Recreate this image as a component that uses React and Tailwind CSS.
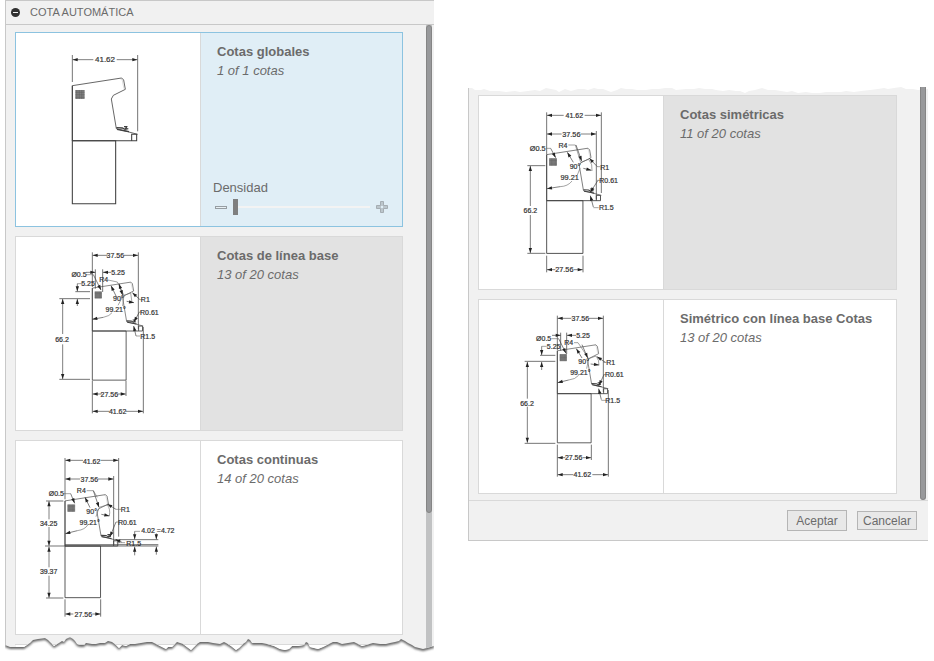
import React from 'react';

const INK = '#404040';

function Head({ x, y, angle }) {
  return <polygon points="0,0 -15,-5 -15,5" fill="#222" transform={`translate(${x} ${y}) rotate(${angle})`} />;
}

/* Straight line with an optional arrow head at its start and end. */
function Arrow({ line }) {
  const [x1, y1, x2, y2, heads = 'e'] = line;
  const angle = (Math.atan2(y2 - y1, x2 - x1) * 180) / Math.PI;
  return (
    <g>
      <line x1={x1} y1={y1} x2={x2} y2={y2} stroke={INK} strokeWidth="2" />
      {heads.includes('e') && <Head x={x2} y={y2} angle={angle} />}
      {heads.includes('s') && <Head x={x1} y={y1} angle={angle + 180} />}
    </g>
  );
}

function Value({ x, y, size = 21, children }) {
  return (
    <text x={x} y={y} fontSize={size} textAnchor="middle" dominantBaseline="central" fill="#333" stroke="#333" strokeWidth="0.6">
      {children}
    </text>
  );
}

/* Side view of the cabinet; the origin is where head and base meet on the left. */
function Cabinet({ x, y, scale }) {
  const cells = [12, 17, 22, 27, 32];
  return (
    <g transform={`translate(${x} ${y}) scale(${scale})`} fill="none" stroke={INK} strokeWidth="3.2">
      <path d="M0 0V-165L148 -188L154 -182L159 -154L123 -136L117 -125L132 -36L196 -19" strokeWidth="2.4" />
      <path d="M143 -186L149 -184L155 -156" strokeWidth="1" stroke="#999" />
      <path d="M0 0V-165M0 0H193V-19H178V0" />
      <path d="M0 0H130V189H0Z" />
      <path d="M132 -39L150 -38L158 -34L168 -36M134 -34L160 -29L170 -27M155 -42L163 -42L159 -34" strokeWidth="4" />
      <rect x="9" y="-152" width="28" height="27" fill="#999" stroke="none" />
      {cells.map((c) => (
        <path key={c} d={`M${c} -152V-125M9 ${c - 161}H37`} strokeWidth="1.6" stroke="#555" />
      ))}
    </g>
  );
}

function Drawing({ viewBox, title, cabinet, lines = [], arrows = [], curves = [], values = [] }) {
  return (
    <svg viewBox={viewBox} role="img" aria-label={title} className="block w-full h-full" fontFamily='"Liberation Sans", Arial, sans-serif'>
      <Cabinet {...cabinet} />
      {lines.map((d) => (
        <path key={d} d={d} fill="none" stroke={INK} strokeWidth="2.2" />
      ))}
      {curves.map((d) => (
        <path key={d} d={d} fill="none" stroke="#666" strokeWidth="1.8" />
      ))}
      {arrows.map((line) => (
        <Arrow key={line.join()} line={line} />
      ))}
      {values.map(([x, y, label, size]) => (
        <Value key={`${x}-${y}`} x={x} y={y} size={size}>
          {label}
        </Value>
      ))}
    </svg>
  );
}

const drawings = {
  global: {
    viewBox: '48 99 552 579',
    cabinet: { x: 217, y: 422, scale: 1 },
    lines: ['M217 165V246M413 165V394'],
    arrows: [[280, 179, 218, 179], [350, 179, 412, 179]],
    values: [[315, 179, '41.62', 24]],
  },
  baseline: {
    viewBox: '18 15 552 579',
    cabinet: { x: 247, y: 297, scale: 0.78 },
    lines: [
      'M247 61V165M385 61V292', 'M400 285V544M247 446V544M348 446V492',
      'M148 200H240M196 179H240M148 442H240', 'M256 112V170M278 112V180',
    ],
    arrows: [
      [292, 70, 248, 70], [342, 70, 384, 70],
      [158, 306, 158, 201], [158, 337, 158, 441],
      [275, 486, 248, 486], [322, 486, 347, 486],
      [298, 538, 248, 538], [348, 538, 399, 538],
      [304, 121, 279, 121], [228, 121, 256, 121],
      [202, 155, 202, 178], [202, 222, 202, 201],
      [250, 128, 273, 174], [327, 155, 338, 190, 'se'],
      [390, 203, 367, 182], [388, 240, 372, 270], [378, 312, 371, 282],
      [350, 208, 372, 212],
      [280, 256, 247, 262], [320, 196, 303, 161],
    ],
    curves: ['M228 128H250M202 155H218M294 144L322 150L342 190L362 183L366 212', 'M338 222L342 188M306 242Q300 252 280 256M340 190L324 220', 'M390 203H398M388 240H396M378 312H390'],
    values: [
      [316, 70, '37.56'], [207, 127, 'Ø0.5'], [324, 121, '5.25'], [234, 155, '5.25'],
      [281, 143, 'R4'], [325, 200, '90°'], [317, 231, '99.21°'], [406, 203, 'R1'],
      [418, 240, 'R0.61'], [156, 321, '66.2'], [413, 314, 'R1.5'], [298, 486, '27.56'], [323, 538, '41.62'],
    ],
  },
  continuous: {
    viewBox: '18 15 552 579',
    cabinet: { x: 165, y: 330, scale: 0.82 },
    lines: [
      'M165 66V190M326 66V302M311 120V326', 'M165 490V542M272 490V542',
      'M108 195H160M105 330H445M108 486H160M326 311H445', 'M165 326H445',
    ],
    arrows: [
      [219, 73, 166, 73], [272, 73, 325, 73], [210, 129, 166, 129], [264, 129, 310, 129],
      [117, 250, 117, 196], [117, 273, 117, 329], [117, 394, 117, 332], [117, 419, 117, 485],
      [190, 534, 166, 534], [247, 534, 271, 534],
      [374, 286, 374, 310], [374, 358, 374, 332], [439, 292, 439, 310], [439, 356, 439, 332],
      [182, 173, 194, 202], [250, 164, 267, 214], [318, 220, 292, 204],
      [318, 258, 300, 302], [274, 235, 298, 240], [202, 284, 166, 293], [240, 215, 225, 184], [335, 318, 316, 310],
    ],
    curves: ['M160 173H182M230 164H250L262 184M267 214L292 207Q302 219 298 240', 'M266 218L258 242M234 266Q225 281 202 284M318 220H334M318 258H328M374 286H390M320 320H345'],
    values: [
      [245, 75, '41.62'], [238, 129, '37.56'], [139, 173, 'Ø0.5'], [214, 164, 'R4'],
      [245, 226, '90°'], [239, 258, '99.21°'], [346, 220, 'R1'], [352, 258, 'R0.61'],
      [116, 262, '34.25'], [116, 407, '39.37'], [414, 284, '4.02'], [467, 283, '=4.72'], [371, 321, 'R1.5'], [220, 534, '27.56'],
    ],
  },
  symmetric: {
    viewBox: '57 63 552 579',
    cabinet: { x: 260, y: 377, scale: 0.837 },
    lines: ['M260 112V238M424 112V354M409 168V373', 'M260 542V592M369 542V592', 'M202 272H256M202 535H256'],
    arrows: [
      [311, 121, 261, 121], [374, 121, 423, 121], [305, 177, 261, 177], [362, 177, 408, 177],
      [211, 393, 211, 273], [211, 420, 211, 534], [286, 584, 261, 584], [342, 584, 368, 584],
      [272, 220, 287, 248], [348, 210, 365, 258], [412, 275, 388, 250], [414, 316, 391, 352],
      [400, 396, 391, 362], [370, 280, 394, 286], [300, 335, 261, 341], [340, 262, 322, 232],
    ],
    curves: ['M258 220H272M325 210H346L362 262L386 253Q399 268 396 288', 'M360 280L352 300M336 318Q324 334 300 335M412 275H420M412 316H420M400 398H416'],
    values: [
      [343, 121, '41.62'], [334, 177, '37.56', 22], [233, 221, 'Ø0.5', 22], [309, 210, 'R4'],
      [345, 275, '90°'], [329, 306, '99.21', 22], [434, 276, 'R1'], [446, 315, 'R0.61'],
      [211, 405, '66.2'], [439, 397, 'R1.5'], [313, 584, '27.56', 22],
    ],
  },
  symmetricBaseline: {
    viewBox: '57 30 552 579',
    cabinet: { x: 292, y: 311, scale: 0.78 },
    lines: [
      'M292 77V180M430 77V306', 'M445 300V560M292 464V560M394 464V510',
      'M194 214H286M240 196H286M194 460H286', 'M302 128V182M320 128V192',
    ],
    arrows: [
      [334, 85, 293, 85], [387, 85, 429, 85], [202, 326, 202, 216], [202, 350, 202, 458],
      [316, 503, 293, 503], [368, 503, 393, 503], [340, 554, 293, 554], [397, 554, 444, 554],
      [348, 136, 321, 136], [276, 136, 302, 136], [245, 169, 245, 195], [245, 240, 245, 216],
      [296, 146, 318, 190], [366, 164, 383, 204], [436, 217, 411, 200], [432, 254, 417, 286],
      [424, 329, 416, 296], [392, 222, 417, 225], [326, 270, 293, 278], [366, 204, 349, 176],
    ],
    curves: ['M274 146H296M245 169H260M342 158H354L386 206L408 198Q418 210 417 226', 'M386 206L380 236M356 256Q346 268 326 270M430 217H440M430 254H438M424 331H438'],
    values: [
      [361, 85, '37.56'], [251, 144, 'Ø0.5'], [369, 136, '5.25'], [281, 170, '5.25'],
      [326, 158, 'R4'], [371, 215, '90°'], [361, 246, '99.21°'], [452, 218, 'R1'],
      [463, 254, 'R0.61'], [201, 339, '66.2'], [458, 331, 'R1.5'], [341, 503, '27.56'], [367, 554, '41.62'],
    ],
  },
};

const tones = {
  selected: { card: 'border-[#8cc3e0]', side: 'bg-[#e0eef6]' },
  muted: { card: 'border-[#d9d9d9]', side: 'bg-[#e2e2e2]' },
  plain: { card: 'border-[#d9d9d9]', side: 'bg-white' },
};

function Option({ title, count, drawing, tone = 'plain', children }) {
  return (
    <li className={`flex h-[195px] border bg-white ${tones[tone].card}`}>
      <div className="w-[185px] shrink-0 border-r border-[#d9d9d9]">
        <Drawing title={title} {...drawings[drawing]} />
      </div>
      <div className={`flex min-w-0 flex-1 flex-col justify-between ${tones[tone].side}`}>
        <div className="pl-4 pt-[9px] leading-[19px]">
          <h2 className="font-bold whitespace-nowrap">{title}</h2>
          <p className="italic">{count}</p>
        </div>
        {children}
      </div>
    </li>
  );
}

function Density() {
  return (
    <div className="px-3 pb-[9px]">
      <label htmlFor="density" className="block leading-[19px]">Densidad</label>
      <div className="flex h-5 items-center">
        <button type="button" aria-label="Reducir densidad" className="ml-[2px] mr-[5px]">
          <svg width="13" height="5" viewBox="0 0 13 5" className="block">
            <rect x="0.5" y="1.5" width="11" height="2" fill="#e8f0f4" stroke="#969da2" />
          </svg>
        </button>
        <input
          id="density"
          type="range"
          min="0"
          max="20"
          defaultValue="0"
          className="h-4 min-w-0 flex-1 appearance-none bg-transparent [&::-webkit-slider-runnable-track]:h-[2px] [&::-webkit-slider-runnable-track]:bg-[#f3f3f3] [&::-webkit-slider-thumb]:-mt-[7px] [&::-webkit-slider-thumb]:h-4 [&::-webkit-slider-thumb]:w-[5px] [&::-webkit-slider-thumb]:appearance-none [&::-webkit-slider-thumb]:bg-[#7f7f7f]"
        />
        <button type="button" aria-label="Aumentar densidad" className="ml-[6px] mr-[2px]">
          <svg width="12" height="12" viewBox="0 0 12 12" className="block">
            <path d="M4.5 .5h3v4h4v3h-4v4h-3v-4h-4v-3h4z" fill="#bcc6cc" stroke="#a5adb2" />
            <rect x="5" y="5" width="2" height="2" fill="#e0eef6" />
          </svg>
        </button>
      </div>
    </div>
  );
}

const bottomTear =
  'M0 0H429V11L422 13L418 14L410 12L407 10L403 8L400 6L396 4L394 6L390 7L385 8L381 9L375 9L368 8L361 10L357 11L353 9L349 7L343 8L337 9L332 7L328 7L322 10L318 12L313 14L309 13L305 12L303 8L301 7L299 10L293 11L287 11L284 14L280 15L275 14L269 11L262 9L257 8L251 8L247 8L245 5L243 4L241 7L238 9L234 13L231 15L226 11L221 8L219 7L215 9L208 8L203 7L195 7L192 9L189 12L186 15L182 12L178 9L172 7L169 10L167 12L163 12L161 14L157 12L151 9L147 7L142 7L136 8L130 9L125 9L121 11L117 10L114 13L111 10L107 7L103 6L100 8L95 8L91 9L87 9L81 8L79 10L75 10L72 9L70 6L68 4L65 2L61 4L59 7L57 6L54 8L49 11L46 8L43 5L40 3L33 4L28 5L25 8L22 10L19 12L14 12L9 12L5 12L0 10Z';

function BottomTear() {
  return (
    <svg viewBox="0 0 429 26" preserveAspectRatio="none" aria-hidden="true" className="block h-[26px] w-full">
      <defs>
        <clipPath id="tear-clip"><path d={bottomTear} /></clipPath>
        <filter id="tear-shadow" x="-5%" y="-10%" width="110%" height="160%"><feGaussianBlur stdDeviation="1" /></filter>
        <clipPath id="tear-area"><rect x="0" y="1" width="429" height="25" /></clipPath>
      </defs>
      <g clipPath="url(#tear-area)">
        <path d={bottomTear} fill="#666" transform="translate(0 2)" filter="url(#tear-shadow)" />
      </g>
      <path d={bottomTear} fill="#f1f1f1" />
      <g clipPath="url(#tear-clip)">
        <path d="M10 9.5H398" stroke="#d9d9d9" />
        <rect x="11" y="10" width="386" height="10" fill="#fff" />
        <rect x="421" y="0" width="6" height="26" fill="#c1c2c3" />
        <rect x="0" y="0" width="1" height="26" fill="#c8c8c8" />
      </g>
    </svg>
  );
}

function TopTear() {
  return (
    <svg viewBox="0 0 460 8" preserveAspectRatio="none" aria-hidden="true" className="block h-2 w-full">
      <path
        d="M0 8V1L4 1L7 3L13 3L16 2L22 4L31 4L38 5L47 4L52 5L60 4L67 3L72 4L78 1L83 2L88 3L91 5L97 2L103 4L110 2L116 2L120 3L126 1L130 2L135 2L143 5L149 3L153 1L158 2L164 2L169 3L178 3L184 2L191 2L197 1L204 1L208 3L218 2L226 2L231 1L237 2L244 2L248 3L255 4L261 3L268 4L272 4L277 6L281 4L287 3L294 1L300 3L307 3L313 4L319 5L324 4L330 6L338 5L344 6L352 6L358 5L366 5L373 5L378 4L386 5L393 4L402 3L410 2L416 1L420 2L426 1L433 0L438 2L445 2L450 3L460 2V8Z"
        fill="#f1f1f1"
      />
      <rect x="0" y="1" width="1" height="7" fill="#c8c8c8" />
      <rect x="452" y="0" width="6" height="8" fill="#98999b" />
      <path d="M452.5 0V8M457.5 0V8" stroke="#858585" />
    </svg>
  );
}

export default function App() {
  return (
    <main className="grid grid-cols-[429fr_460fr] items-start gap-[34px] bg-white pl-[5px] pr-[6px] font-['Liberation_Sans',Arial,sans-serif] text-[13px] text-[#6b6b6b]">
      <section className="min-w-0">
        <div className="border-l border-t border-[#c8c8c8] bg-[#f1f1f1]">
          <header className="flex h-6 items-center gap-[10px] border-b border-[#c8c8c8] pl-[5px]">
            <button type="button" aria-label="Contraer">
              <svg width="9" height="9" viewBox="0 0 9 9" className="block">
                <circle cx="4.5" cy="4.5" r="4.5" fill="#303030" />
                <rect x="2" y="4" width="5" height="1" fill="#f1f1f1" />
              </svg>
            </button>
            <h1 className="pb-px text-[11px] leading-4">COTA AUTOMÁTICA</h1>
          </header>
          <div className="flex">
            <ul className="flex min-w-0 flex-1 flex-col gap-[9px] pl-[9px] pr-[23px] pt-[7px]">
              <Option title="Cotas globales" count="1 of 1 cotas" drawing="global" tone="selected">
                <Density />
              </Option>
              <Option title="Cotas de línea base" count="13 of 20 cotas" drawing="baseline" tone="muted" />
              <Option title="Cotas continuas" count="14 of 20 cotas" drawing="continuous" />
            </ul>
            <div className="mr-[2px] w-[6px] bg-[#c1c2c3]">
              <div className="h-[80%] rounded-full border border-[#858585] bg-[#98999b]" />
            </div>
          </div>
        </div>
        <BottomTear />
      </section>

      <section className="mt-[87px] min-w-0">
        <TopTear />
        <div className="border-b border-l border-[#c8c8c8] bg-[#f1f1f1]">
          <div className="flex">
            <ul className="flex min-w-0 flex-1 flex-col gap-[9px] pb-[6px] pl-[9px] pr-[23px]">
              <Option title="Cotas simétricas" count="11 of 20 cotas" drawing="symmetric" tone="muted" />
              <Option title="Simétrico con línea base Cotas" count="13 of 20 cotas" drawing="symmetricBaseline" />
            </ul>
            <div className="mr-[2px] w-[6px] rounded-b-full border-x border-b border-[#858585] bg-[#98999b]" />
          </div>
          <footer className="flex h-10 items-center justify-end gap-[10px] border-t border-[#d9d9d9] pr-[11px] text-xs">
            <button type="button" className="h-[21px] w-[60px] border border-[#b5b5b5] bg-[#e8e8e8] leading-none">Aceptar</button>
            <button type="button" className="h-[19px] w-[60px] border border-[#b5b5b5] bg-[#e8e8e8] leading-none">Cancelar</button>
          </footer>
        </div>
      </section>
    </main>
  );
}
